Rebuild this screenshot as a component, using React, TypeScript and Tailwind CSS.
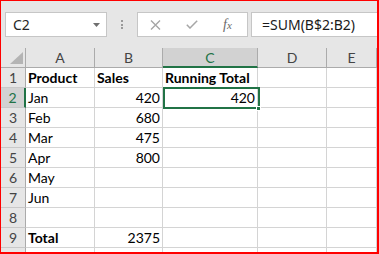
import React from "react";

const cols = ["A", "B", "C", "D", "E"];

type Cell = { v?: string; bold?: boolean; right?: boolean };

const rows: Cell[][] = [
  [{ v: "Product", bold: true }, { v: "Sales", bold: true }, { v: "Running Total", bold: true }, {}, {}],
  [{ v: "Jan" }, { v: "420", right: true }, { v: "420", right: true }, {}, {}],
  [{ v: "Feb" }, { v: "680", right: true }, {}, {}, {}],
  [{ v: "Mar" }, { v: "475", right: true }, {}, {}, {}],
  [{ v: "Apr" }, { v: "800", right: true }, {}, {}, {}],
  [{ v: "May" }, {}, {}, {}, {}],
  [{ v: "Jun" }, {}, {}, {}, {}],
  [{}, {}, {}, {}, {}],
  [{ v: "Total", bold: true }, { v: "2375", right: true }, {}, {}, {}],
  [{}, {}, {}, {}, {}],
];

function Toolbar() {
  return (
    <div className="h-[47px] shrink-0 flex items-start pt-[11px] pl-[4px] bg-[#e6e6e6]">
      <div className="w-[102px] h-[25px] bg-white border border-[#c6c6c6] flex items-center pl-[7px] pr-[6px]">
        <span className="flex-1 text-[14px] text-[#262626] font-['Noto_Sans',sans-serif] leading-none">C2</span>
        <svg width="7" height="4" viewBox="0 0 7 4">
          <path d="M0 0h7L3.5 4z" fill="#6f6f6f" />
        </svg>
      </div>
      <div className="w-[30px] h-[25px] flex flex-col items-center justify-center gap-[1.5px]">
        <div className="w-[2px] h-[2px] bg-[#9a9a9a]" />
        <div className="w-[2px] h-[2px] bg-[#9a9a9a]" />
        <div className="w-[2px] h-[2px] bg-[#9a9a9a]" />
      </div>
      <div className="w-[111px] h-[25px] bg-white border border-[#c6c6c6] flex items-center">
        <svg className="ml-[12px]" width="11" height="10" viewBox="0 0 11 10">
          <path d="M1 0.5l9 9M10 0.5l-9 9" stroke="#a6a6a6" strokeWidth="1.4" />
        </svg>
        <svg className="ml-[25px]" width="12" height="9" viewBox="0 0 12 9">
          <path d="M0.8 4.8l3.2 3.2L11.2 0.8" stroke="#a6a6a6" strokeWidth="1.5" fill="none" />
        </svg>
        <span className="ml-[25px] text-[14px] italic text-[#6a6a6a] font-['Liberation_Serif',serif] leading-none">
          f<span className="text-[11px]">x</span>
        </span>
      </div>
      <div className="ml-[3px] flex-1 h-[25px] bg-white border border-r-0 border-[#c6c6c6] flex items-center pl-[10px]">
        <span className="text-[14px] text-[#1a1a1a] font-['Noto_Sans',sans-serif] leading-none whitespace-nowrap">
          =SUM(B$2:B2)
        </span>
      </div>
    </div>
  );
}

function Sheet() {
  return (
    <div className="relative flex-1 bg-white font-['Lato',sans-serif] text-[14px] text-black overflow-hidden">
      <div className="grid grid-cols-[25px_69px_68px_95px_69px_1fr] auto-rows-[20px]">
        <div className="relative bg-[#e6e6e6] border-r border-b border-[#ababab]">
          <svg className="absolute left-[9px] top-[4px]" width="13" height="12" viewBox="0 0 13 12">
            <path d="M13 0V12H0z" fill="#b4b4b4" />
          </svg>
        </div>
        {cols.map((c) =>
          c === "C" ? (
            <div
              key={c}
              className="bg-[#d2d2d2] border-r border-[#ababab] border-b-2 border-b-[#217346] flex items-center justify-center text-[#217346]"
            >
              {c}
            </div>
          ) : (
            <div
              key={c}
              className="bg-[#e6e6e6] border-r border-b border-[#ababab] flex items-center justify-center text-[#444]"
            >
              {c}
            </div>
          )
        )}
        {rows.map((r, i) => (
          <React.Fragment key={i}>
            {i === 1 ? (
              <div className="bg-[#d2d2d2] border-r-2 border-r-[#217346] border-b border-b-[#c8c8c8] flex items-center justify-center text-[#217346]">
                {i + 1}
              </div>
            ) : (
              <div className="bg-[#e6e6e6] border-r border-b border-r-[#ababab] border-b-[#c8c8c8] flex items-center justify-center text-[#444]">
                {i < 9 ? i + 1 : ""}
              </div>
            )}
            {r.map((cell, j) => (
              <div
                key={j}
                className={`border-r border-b border-[#d4d4d4] flex items-end leading-[18px] px-[2px] whitespace-nowrap ${
                  cell.right ? "justify-end" : "justify-start"
                } ${cell.bold ? "font-bold" : ""}`}
              >
                {cell.v}
              </div>
            ))}
          </React.Fragment>
        ))}
      </div>
      <div className="absolute left-[162px] top-[39px] w-[97px] h-[22px] border-2 border-[#217346] pointer-events-none" />
      <div className="absolute left-[255px] top-[58px] w-[5px] h-[5px] bg-[#217346] border border-white" />
    </div>
  );
}

export default function App() {
  return (
    <div className="w-[379px] h-[254px] flex flex-col overflow-hidden border-t border-l border-r-2 border-b-2 border-[#ff0000] bg-[#e6e6e6]">
      <Toolbar />
      <Sheet />
    </div>
  );
}
